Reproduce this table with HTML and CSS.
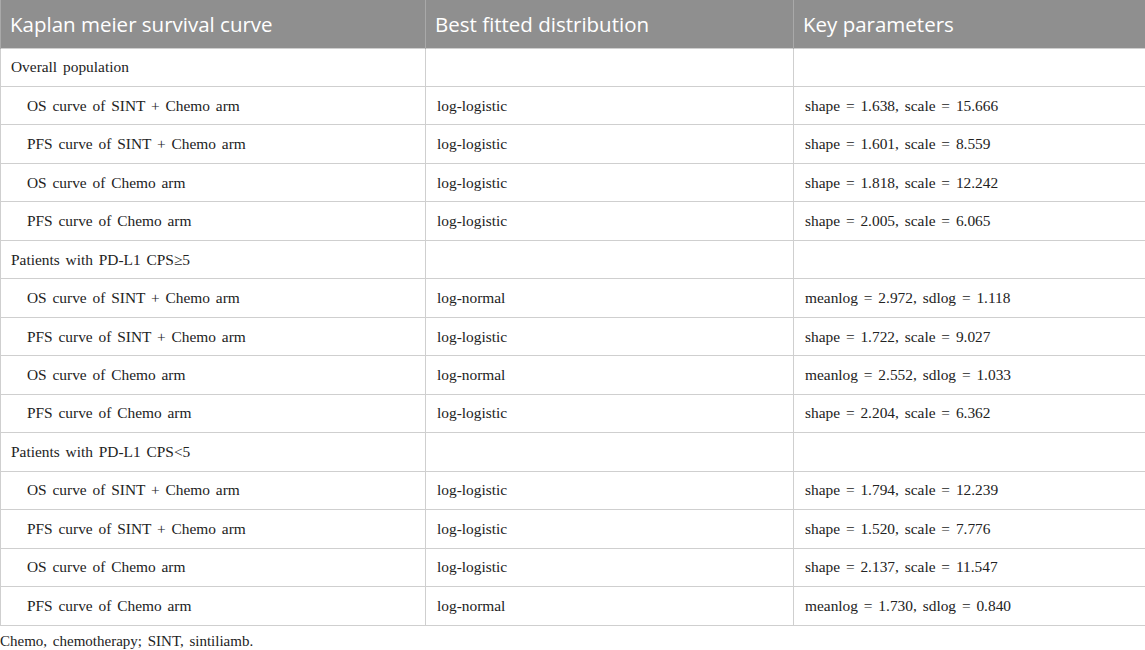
FILE: index.html
```html
<!DOCTYPE html>
<html>
<head>
<meta charset="utf-8">
<link rel="stylesheet" href="styles.css">
</head>
<body>
<table class="tbl">
  <thead>
    <tr class="head">
      <th class="c1">Kaplan meier survival curve</th>
      <th class="c2">Best fitted distribution</th>
      <th class="c3">Key parameters</th>
    </tr>
  </thead>
  <tbody>
    <tr><td>Overall population</td><td></td><td></td></tr>
    <tr><td class="ind">OS curve of SINT + Chemo arm</td><td>log-logistic</td><td>shape = 1.638, scale = 15.666</td></tr>
    <tr><td class="ind">PFS curve of SINT + Chemo arm</td><td>log-logistic</td><td>shape = 1.601, scale = 8.559</td></tr>
    <tr><td class="ind">OS curve of Chemo arm</td><td>log-logistic</td><td>shape = 1.818, scale = 12.242</td></tr>
    <tr><td class="ind">PFS curve of Chemo arm</td><td>log-logistic</td><td>shape = 2.005, scale = 6.065</td></tr>
    <tr><td>Patients with PD-L1 CPS≥5</td><td></td><td></td></tr>
    <tr><td class="ind">OS curve of SINT + Chemo arm</td><td>log-normal</td><td>meanlog = 2.972, sdlog = 1.118</td></tr>
    <tr><td class="ind">PFS curve of SINT + Chemo arm</td><td>log-logistic</td><td>shape = 1.722, scale = 9.027</td></tr>
    <tr><td class="ind">OS curve of Chemo arm</td><td>log-normal</td><td>meanlog = 2.552, sdlog = 1.033</td></tr>
    <tr><td class="ind">PFS curve of Chemo arm</td><td>log-logistic</td><td>shape = 2.204, scale = 6.362</td></tr>
    <tr><td>Patients with PD-L1 CPS&lt;5</td><td></td><td></td></tr>
    <tr><td class="ind">OS curve of SINT + Chemo arm</td><td>log-logistic</td><td>shape = 1.794, scale = 12.239</td></tr>
    <tr><td class="ind">PFS curve of SINT + Chemo arm</td><td>log-logistic</td><td>shape = 1.520, scale = 7.776</td></tr>
    <tr><td class="ind">OS curve of Chemo arm</td><td>log-logistic</td><td>shape = 2.137, scale = 11.547</td></tr>
    <tr><td class="ind">PFS curve of Chemo arm</td><td>log-normal</td><td>meanlog = 1.730, sdlog = 0.840</td></tr>
  </tbody>
</table>
<p class="note">Chemo, chemotherapy; SINT, sintiliamb.</p>
</body>
</html>
```
FILE: styles.css
```css
html, body {
  margin: 0;
  padding: 0;
  background: #fff;
}
.tbl {
  width: 1145px;
  border-collapse: collapse;
  table-layout: fixed;
  font-family: "Liberation Serif", "Times New Roman", serif;
  font-size: 15.4px;
  word-spacing: 2px;
  color: #222;
}
.tbl th {
  background: #8f8f8f;
  color: #fff;
  font-family: "Open Sans", "Noto Sans", sans-serif;
  font-weight: 400;
  font-size: 20.5px;
  word-spacing: 0;
  text-align: left;
  height: 48px;
  padding: 0 9px;
  border-left: 1px solid #a9a9a9;
  border-right: 1px solid #a9a9a9;
  box-sizing: border-box;
}
.tbl th.c1 { width: 425px; }
.tbl th.c2 { width: 368px; }
.tbl th.c3 { width: 352px; }
.tbl td {
  height: 38.47px;
  padding: 0 10px;
  border: 1px solid #cfcfcf;
  box-sizing: border-box;
  vertical-align: middle;
}
.tbl td.ind {
  padding-left: 26px;
}
.tbl td + td {
  padding-left: 11px;
}
.note {
  margin: 7px 0 0 0;
  font-family: "Liberation Serif", "Times New Roman", serif;
  font-size: 15px;
  word-spacing: 2px;
  color: #222;
}
```
